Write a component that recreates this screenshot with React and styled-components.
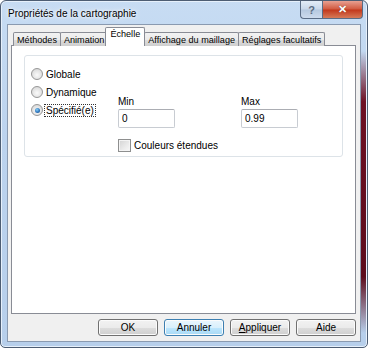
import React from "react";
import styled, { createGlobalStyle, css } from "styled-components";

const GlobalStyle = createGlobalStyle`
  html, body { margin: 0; padding: 0; background: #ffffff; }
  body { font-family: "Liberation Sans", Arial, sans-serif; font-size: 10px; color: #000; }
`;

const Window = styled.div`
  position: relative;
  width: 366px;
  height: 346px;
  display: flex;
  flex-direction: column;
  border: 1px solid #4d5d73;
  border-radius: 6px 6px 5px 5px;
  background: linear-gradient(180deg, #c7dcf3 0%, #bcd3ee 40%, #b7cfeb 100%);
  box-shadow: inset 0 0 0 1px #e6f0fb;

  &::after {
    content: "";
    position: absolute;
    right: 1px;
    top: 50px;
    width: 5px;
    height: 282px;
    background: linear-gradient(180deg, rgba(120, 20, 40, 0) 0%, #6d1024 18%, #5c0c1d 80%, rgba(120, 20, 40, 0) 100%);
  }
`;

const TitleBar = styled.div`
  height: 23px;
  display: flex;
  align-items: flex-start;
  justify-content: space-between;
  padding-left: 7px;
`;

const Title = styled.span`
  margin-top: 7px;
  font-size: 10px;
  color: #000;
  text-shadow: 0 0 6px #ffffff, 0 0 3px #ffffff;
`;

const Caption = styled.div`
  display: flex;
  margin-right: 4px;
`;

const CaptionButton = styled.div`
  height: 17px;
  display: flex;
  align-items: center;
  justify-content: center;
  border: 1px solid #5a6c85;
  border-top: none;
  font-weight: bold;
  font-size: 11px;
  ${(p) =>
    p.$close
      ? css`
          width: 39px;
          border-radius: 0 0 4px 0;
          background: linear-gradient(180deg, #e8a091 0%, #d1593f 48%, #c2371b 52%, #d67a58 100%);
          color: #ffffff;
          text-shadow: 0 0 1px #5a1a10;
        `
      : css`
          width: 21px;
          border-right: none;
          border-radius: 0 0 0 4px;
          background: linear-gradient(180deg, #e3ecf7 0%, #c9d8ea 48%, #b5c8df 52%, #cddbed 100%);
          color: #5d6d82;
        `}
`;

const Client = styled.div`
  flex: 1;
  margin: 0 6px 5px 6px;
  border: 1px solid #8a9ab0;
  background: #f0f0f0;
  display: flex;
  flex-direction: column;
  padding: 5px 4px 5px 3px;
`;

const TabRow = styled.div`
  display: flex;
  align-items: flex-end;
  height: 16px;
  padding-left: 2px;
  position: relative;
  z-index: 1;
  margin-bottom: -1px;
  font-size: 9.1px;
`;

const Tab = styled.div`
  height: 13px;
  padding: 0 3px;
  display: flex;
  align-items: center;
  border: 1px solid #898c95;
  border-bottom: none;
  border-radius: 2px 2px 0 0;
  margin-right: -1px;
  background: linear-gradient(180deg, #f2f2f2 0%, #ebebeb 50%, #dddddd 51%, #cfcfcf 100%);
  white-space: nowrap;
  ${(p) =>
    p.$active &&
    css`
      height: 17px;
      margin: 0 -1px 0 -2px;
      padding: 1px 4px 0 4px;
      background: #ffffff;
      position: relative;
      z-index: 2;
      align-items: flex-start;
    `}
`;

const Panel = styled.div`
  flex: 1;
  border: 1px solid #898c95;
  background: #ffffff;
  padding: 9px 12px 0 12px;
`;

const GroupBox = styled.div`
  height: 100px;
  border: 1px solid #dde3e8;
  border-radius: 3px;
  display: grid;
  grid-template-columns: 87px 123px 1fr;
  padding-left: 6px;
`;

const RadioList = styled.div`
  display: flex;
  flex-direction: column;
  gap: 6px;
  padding-top: 12px;
`;

const RadioRow = styled.label`
  display: flex;
  align-items: center;
  height: 12px;
  gap: 1px;
`;

const RadioCircle = styled.span`
  width: 10px;
  height: 10px;
  border-radius: 50%;
  border: 1px solid #979797;
  background: radial-gradient(circle at 50% 60%, #fafafa 0%, #e2e2e2 60%, #cdcdcd 100%);
  display: flex;
  align-items: center;
  justify-content: center;
  flex: none;

  &::after {
    content: "";
    width: 5px;
    height: 5px;
    border-radius: 50%;
    background: radial-gradient(circle at 40% 35%, #8ad0f5 0%, #2f78c0 55%, #18467a 100%);
    display: ${(p) => (p.$checked ? "block" : "none")};
  }
`;

const RadioText = styled.span`
  padding: 0 1px;
  border: 1px dotted ${(p) => (p.$focus ? "#333" : "transparent")};
  line-height: 11px;
`;

const Field = styled.div`
  display: flex;
  flex-direction: column;
  padding-top: 40px;
`;

const FieldLabel = styled.span`
  height: 13px;
`;

const TextBox = styled.div`
  width: 57px;
  height: 19px;
  box-sizing: border-box;
  border: 1px solid #c8ccd2;
  border-top-color: #abadb3;
  border-radius: 2px;
  display: flex;
  align-items: center;
  padding-left: 3px;
  background: #ffffff;
`;

const CheckRow = styled.label`
  display: flex;
  align-items: center;
  gap: 3px;
  margin-top: 11px;
  white-space: nowrap;
`;

const CheckBox = styled.span`
  width: 11px;
  height: 11px;
  border: 1px solid #8e8f8f;
  background: linear-gradient(135deg, #d3d3d3 0%, #ebebeb 60%, #f8f8f8 100%);
  box-shadow: inset 0 0 0 1px #f4f4f4;
  flex: none;
`;

const ButtonRow = styled.div`
  display: flex;
  justify-content: flex-end;
  gap: 6px;
  margin-top: 5px;
`;

const Button = styled.div`
  width: 60px;
  height: 17px;
  box-sizing: border-box;
  border: 1px solid #707070;
  border-radius: 3px;
  display: flex;
  align-items: center;
  justify-content: center;
  background: linear-gradient(180deg, #f2f2f2 0%, #ebebeb 50%, #dddddd 51%, #cfcfcf 100%);
  box-shadow: inset 0 0 0 1px #fbfbfb;
  ${(p) =>
    p.$default &&
    css`
      border-color: #3c7fb1;
      background: linear-gradient(180deg, #eaf6fd 0%, #d9f0fc 50%, #bee6fd 51%, #a7d9f5 100%);
    `}
`;

const radios = [
  { label: "Globale" },
  { label: "Dynamique" },
  { label: "Spécifié(e)", checked: true },
];

const tabs = ["Méthodes", "Animation", "Échelle", "Affichage du maillage", "Réglages facultatifs"];

export default function App() {
  return (
    <>
      <GlobalStyle />
      <Window>
        <TitleBar>
          <Title>Propriétés de la cartographie</Title>
          <Caption>
            <CaptionButton>?</CaptionButton>
            <CaptionButton $close>✕</CaptionButton>
          </Caption>
        </TitleBar>
        <Client>
          <TabRow>
            {tabs.map((t) => (
              <Tab key={t} $active={t === "Échelle"}>{t}</Tab>
            ))}
          </TabRow>
          <Panel>
            <GroupBox>
              <RadioList>
                {radios.map((r) => (
                  <RadioRow key={r.label}>
                    <RadioCircle $checked={r.checked} />
                    <RadioText $focus={r.checked}>{r.label}</RadioText>
                  </RadioRow>
                ))}
              </RadioList>
              <Field>
                <FieldLabel>Min</FieldLabel>
                <TextBox>0</TextBox>
                <CheckRow>
                  <CheckBox />
                  Couleurs étendues
                </CheckRow>
              </Field>
              <Field>
                <FieldLabel>Max</FieldLabel>
                <TextBox>0.99</TextBox>
              </Field>
            </GroupBox>
          </Panel>
          <ButtonRow>
            <Button>OK</Button>
            <Button $default>Annuler</Button>
            <Button>
              <span><u>A</u>ppliquer</span>
            </Button>
            <Button>Aide</Button>
          </ButtonRow>
        </Client>
      </Window>
    </>
  );
}
